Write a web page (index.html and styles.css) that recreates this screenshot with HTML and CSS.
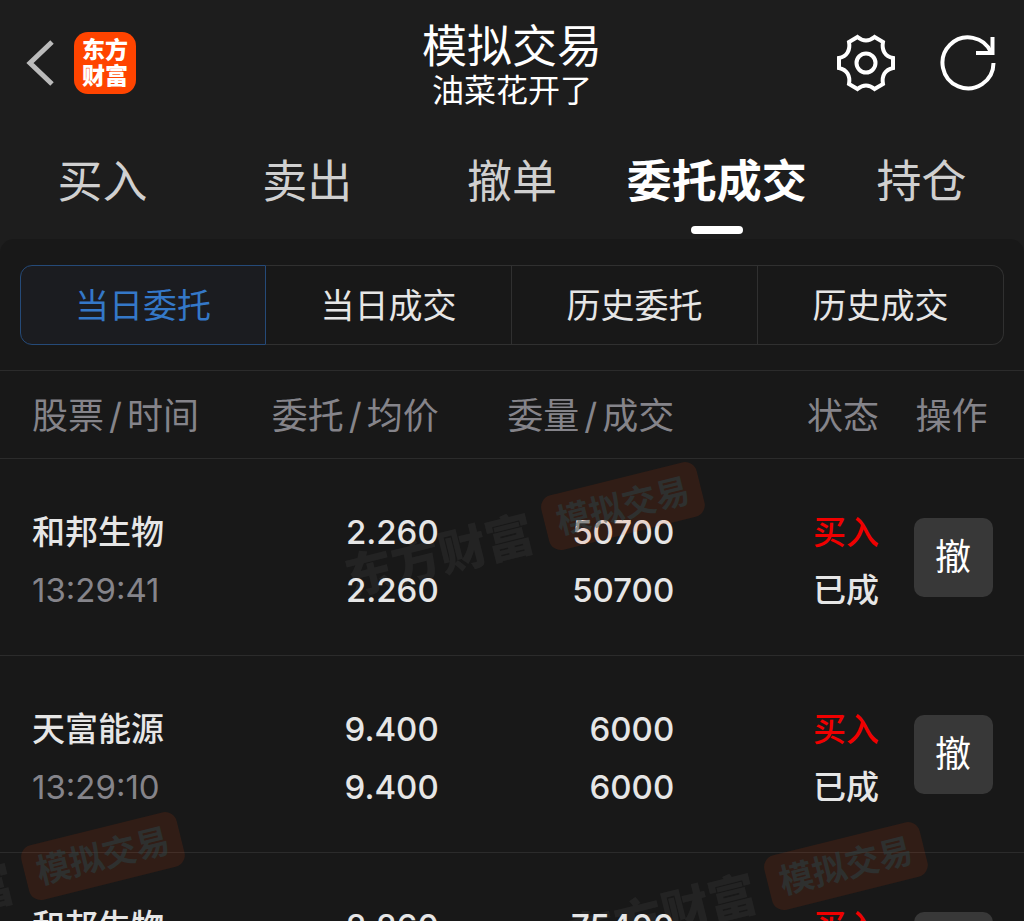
FILE: index.html
```html
<!DOCTYPE html>
<html lang="zh-CN">
<head>
  <meta charset="UTF-8" />
  <meta name="viewport" content="width=device-width, initial-scale=1.0"/>
  <title>模拟交易</title>
  <link rel="stylesheet" href="styles.css">
</head>

<body>
  <header class="topbar">
    <div class="topbar-left">
      <button class="icon-btn back" type="button" aria-label="返回">
        <svg width="30" height="50" viewBox="0 0 30 50"><path d="M26 4 L4 25 L26 46" /></svg>
      </button>
      <a class="logo" href="#">东方<br>财富</a>
    </div>

    <div class="topbar-title">
      <h1>模拟交易</h1>
      <p>油菜花开了</p>
    </div>

    <div class="topbar-right">
      <button class="icon-btn" type="button" aria-label="设置">
        <svg width="60" height="60" viewBox="0 0 60 60">
          <path d="M21.5 4 Q30 11 38.5 4 L47 9 C45.5 17 49 23.5 57 25 V35 C49 36.5 45.5 43 47 51 L38.5 56 Q30 49 21.5 56 L13 51 C14.5 43 11 36.5 3 35 V25 C11 23.5 14.5 17 13 9 Z" />
          <circle cx="30" cy="30" r="9.5" />
        </svg>
      </button>
      <button class="icon-btn" type="button" aria-label="刷新">
        <svg width="60" height="60" viewBox="0 0 60 60">
          <path d="M55.5 30 A25.5 25.5 0 1 1 53.5 20" />
          <path d="M38 20 H54.5 V4" />
        </svg>
      </button>
    </div>
  </header>

  <nav class="tabs">
    <a href="#">买入</a>
    <a href="#">卖出</a>
    <a href="#">撤单</a>
    <a href="#" class="active">委托成交</a>
    <a href="#">持仓</a>
  </nav>

  <main class="panel">
    <div class="segments">
      <button type="button" class="active">当日委托</button>
      <button type="button">当日成交</button>
      <button type="button">历史委托</button>
      <button type="button">历史成交</button>
    </div>

    <table class="orders">
      <thead>
        <tr>
          <th class="col-stock">股票<span class="slash">/</span>时间</th>
          <th class="col-price">委托<span class="slash">/</span>均价</th>
          <th class="col-amount">委量<span class="slash">/</span>成交</th>
          <th class="col-state">状态</th>
          <th class="col-action">操作</th>
        </tr>
      </thead>
      <tbody>
        <tr>
          <td class="col-stock"><div>和邦生物</div><div class="time">13:29:41</div></td>
          <td><div>2.260</div><div>2.260</div></td>
          <td><div>50700</div><div>50700</div></td>
          <td><div class="buy">买入</div><div>已成</div></td>
          <td class="col-action"><button type="button" class="cancel">撤</button></td>
        </tr>
        <tr>
          <td class="col-stock"><div>天富能源</div><div class="time">13:29:10</div></td>
          <td><div>9.400</div><div>9.400</div></td>
          <td><div>6000</div><div>6000</div></td>
          <td><div class="buy">买入</div><div>已成</div></td>
          <td class="col-action"><button type="button" class="cancel">撤</button></td>
        </tr>
        <tr>
          <td class="col-stock"><div>和邦生物</div><div class="time">13:28:55</div></td>
          <td><div>2.260</div><div>2.260</div></td>
          <td><div>75400</div><div>75400</div></td>
          <td><div class="buy">买入</div><div>已成</div></td>
          <td class="col-action"><button type="button" class="cancel">撤</button></td>
        </tr>
      </tbody>
    </table>

    <!-- Watermarks -->
    <div class="watermark mark-1" aria-hidden="true"><b>东方财富</b><span>模拟交易</span></div>
    <div class="watermark mark-2" aria-hidden="true"><b>东方财富</b><span>模拟交易</span></div>
    <div class="watermark mark-3" aria-hidden="true"><b>东方财富</b><span>模拟交易</span></div>
  </main>
</body>
</html>
```

FILE: styles.css
```css
* {
  box-sizing: border-box;
}

body {
  margin: 0;
  height: 100vh;
  display: flex;
  flex-direction: column;
  background: #1d1d1d;
  color: #e6e6e6;
  font-family: Inter, "Noto Sans CJK SC", sans-serif;
}

a {
  color: inherit;
  text-decoration: none;
}

button {
  margin: 0;
  padding: 0;
  border: none;
  background: none;
  color: inherit;
  font: inherit;
  cursor: pointer;
}

/* Top bar */
.topbar {
  display: grid;
  grid-template-columns: 1fr auto 1fr;
  align-items: center;
  flex-shrink: 0;
  height: 125px;
  padding: 0 26px;
}

.topbar-left,
.topbar-right {
  display: flex;
  align-items: center;
}

.topbar-left {
  gap: 18px;
}

.topbar-right {
  justify-content: flex-end;
  gap: 42px;
}

.icon-btn svg {
  display: block;
  fill: none;
  stroke: #fff;
  stroke-width: 4;
}

.back svg {
  stroke: #bbb;
  stroke-width: 5;
}

.logo {
  width: 62px;
  height: 62px;
  padding-top: 5px;
  border-radius: 14px;
  background: #ff4400;
  color: #fff;
  font-size: 23px;
  font-weight: 900;
  line-height: 26px;
  text-align: center;
}

.topbar-title {
  padding-top: 8px;
  color: #fff;
  text-align: center;
}

.topbar-title h1 {
  margin: 0;
  font-size: 45px;
  font-weight: 400;
  line-height: 48px;
}

.topbar-title p {
  margin: 0;
  font-size: 32px;
  font-weight: 400;
  line-height: 40px;
}

/* Main tabs */
.tabs {
  display: grid;
  grid-template-columns: repeat(5, 1fr);
  flex-shrink: 0;
  height: 114px;
}

.tabs a {
  display: flex;
  flex-direction: column;
  align-items: center;
  gap: 12px;
  padding-top: 25px;
  color: #d0d0d0;
  font-size: 45px;
  font-weight: 400;
  line-height: 64px;
  white-space: nowrap;
}

.tabs .active {
  color: #fff;
  font-weight: 700;
}

.tabs .active::after {
  content: "";
  width: 52px;
  height: 8px;
  border-radius: 4px;
  background: #fff;
}

/* Panel */
.panel {
  position: relative;
  flex: 1;
  min-height: 0;
  overflow-x: hidden;
  overflow-y: auto;
  scrollbar-width: none;
  border-radius: 14px 14px 0 0;
  background: #181818;
}

.segments {
  display: grid;
  grid-template-columns: repeat(4, 1fr);
  margin: 26px 20px 25px;
}

.segments button {
  height: 80px;
  padding-bottom: 4px;
  border: 1px solid #303030;
  border-left-width: 0;
  font-size: 34px;
}

.segments button:first-child {
  border-left-width: 1px;
  border-radius: 12px 0 0 12px;
}

.segments button:last-child {
  border-radius: 0 12px 12px 0;
}

.segments .active {
  border-color: #254a78;
  background: #1b1c20;
  color: #3478c8;
}

/* Orders */
.orders {
  width: 100%;
  table-layout: fixed;
  border-collapse: collapse;
  border-top: 1px solid #2b2b2b;
}

.orders tr {
  border-bottom: 1px solid #2b2b2b;
}

.orders th,
.orders td {
  padding: 0;
  text-align: right;
  white-space: nowrap;
}

.orders th {
  height: 88px;
  padding-bottom: 3px;
  color: #85848a;
  font-size: 36px;
  font-weight: 400;
}

.orders td {
  height: 197px;
  padding-top: 8px;
  font-size: 33px;
  font-weight: 500;
  line-height: 58px;
}

.orders .col-stock {
  padding-left: 32px;
  text-align: left;
}

.col-price,
.col-amount {
  width: 23%;
}

.col-state {
  width: 20%;
}

.orders .col-action {
  width: 145px;
  text-align: center;
}

.orders td.col-action {
  padding-top: 0;
  padding-left: 3px;
}

.slash {
  padding: 0 5px;
}

.time {
  color: #85848a;
  font-weight: 400;
}

.buy {
  color: #f00000;
}

.cancel {
  width: 79px;
  height: 79px;
  border-radius: 10px;
  background: #383838;
  color: #fff;
  font-size: 36px;
  font-weight: 400;
  vertical-align: middle;
}

/* Watermarks */
.watermark {
  position: absolute;
  display: flex;
  align-items: center;
  gap: 14px;
  transform: rotate(-14deg);
  white-space: nowrap;
  pointer-events: none;
}

.watermark b {
  color: rgba(255, 255, 255, 0.05);
  font-size: 48px;
  font-weight: 900;
}

.watermark span {
  padding: 0 12px;
  border-radius: 12px;
  background: rgba(255, 70, 10, 0.11);
  color: rgba(44, 68, 72, 0.5);
  font-size: 34px;
  font-weight: 700;
  line-height: 56px;
}

.mark-1 {
  left: 340px;
  top: 257px;
}

.mark-2 {
  left: -180px;
  top: 607px;
}

.mark-3 {
  left: 563px;
  top: 617px;
}
```
